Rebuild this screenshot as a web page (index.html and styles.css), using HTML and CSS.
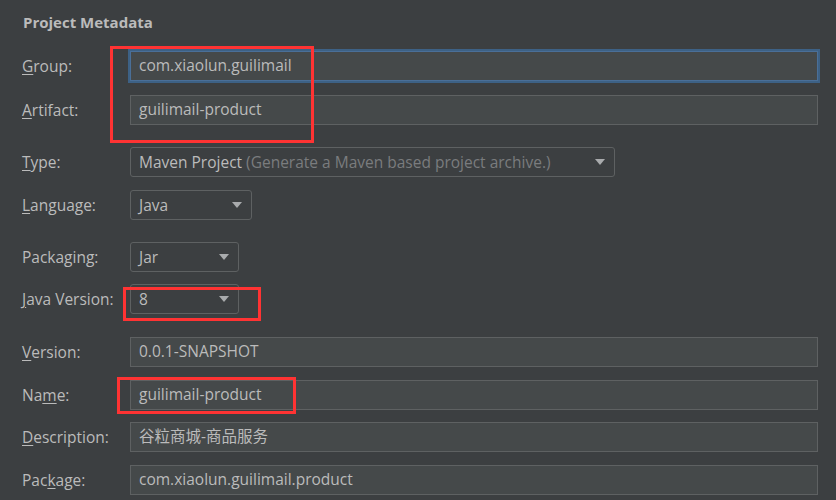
FILE: index.html
```html
<!DOCTYPE html>
<html>
<head>
<meta charset="utf-8">
<link rel="stylesheet" href="styles.css">
</head>
<body>
<div class="panel">
  <div class="title">Project Metadata</div>
  <div class="section s1">
    <div class="row"><label class="lbl"><u>G</u>roup:</label><div class="field focused">com.xiaolun.guilimail</div></div>
    <div class="row"><label class="lbl"><u>A</u>rtifact:</label><div class="field">guilimail-product</div></div>
  </div>
  <div class="section s2">
    <div class="row"><label class="lbl"><u>T</u>ype:</label><div class="combo w-type"><span>Maven Project <span class="hint">(Generate a Maven based project archive.)</span></span><i class="arrow"></i></div></div>
    <div class="row"><label class="lbl"><u>L</u>anguage:</label><div class="combo w-lang"><span>Java</span><i class="arrow"></i></div></div>
  </div>
  <div class="section s3">
    <div class="row"><label class="lbl">Packaging:</label><div class="combo w-small"><span>Jar</span><i class="arrow"></i></div></div>
    <div class="row"><label class="lbl"><u>J</u>ava Version:</label><div class="combo w-small"><span>8</span><i class="arrow"></i></div></div>
  </div>
  <div class="section s4">
    <div class="row"><label class="lbl"><u>V</u>ersion:</label><div class="field">0.0.1-SNAPSHOT</div></div>
    <div class="row"><label class="lbl">Na<u>m</u>e:</label><div class="field">guilimail-product</div></div>
    <div class="row"><label class="lbl"><u>D</u>escription:</label><div class="field">谷粒商城-商品服务</div></div>
    <div class="row"><label class="lbl">Pac<u>k</u>age:</label><div class="field">com.xiaolun.guilimail.product</div></div>
  </div>
  <div class="mark m1"></div>
  <div class="mark m2"></div>
  <div class="mark m3"></div>
</div>
</body>
</html>
```

FILE: styles.css
```css
html, body {
  margin: 0;
  padding: 0;
  background: #3c3f41;
}
body {
  width: 836px;
  height: 500px;
  overflow: hidden;
  font-family: "Open Sans", "Noto Sans CJK SC", sans-serif;
  font-size: 15.5px;
  color: #bbbbbb;
}
.panel {
  position: relative;
  padding: 12px 18px 0 22px;
}
.title {
  font-weight: bold;
  font-size: 15px;
  line-height: 20px;
  padding-left: 1px;
  height: 20px;
}
.section {
  display: flex;
  flex-direction: column;
}
.s1 { margin-top: 19px; gap: 14px; }
.s2 { margin-top: 22px; gap: 13px; }
.s3 { margin-top: 22px; gap: 12px; }
.s4 { margin-top: 23px; gap: 12.67px; }
.row {
  display: flex;
  align-items: center;
  height: 30px;
}
.lbl {
  width: 108px;
  flex: none;
  line-height: 28px;
}
.lbl u {
  text-underline-offset: 2px;
}
.field {
  box-sizing: border-box;
  flex: 1;
  height: 30px;
  background: #45494a;
  border: 1px solid #5e6162;
  padding: 0 8px;
  line-height: 27px;
  white-space: nowrap;
  color: #bbbbbb;
}
.field.focused {
  border-color: #4a6f98;
  box-shadow: 0 0 0 2px #3d6185;
}
.combo {
  box-sizing: border-box;
  height: 30px;
  border: 1px solid #5e6162;
  border-radius: 3px;
  background: #3c3f41;
  padding: 0 9px 1px 8px;
  display: flex;
  align-items: center;
  justify-content: space-between;
  white-space: nowrap;
}
.w-type { width: 485px; }
.w-lang { width: 122px; }
.w-small { width: 109px; }
.hint { color: #7a7c7e; }
.arrow {
  width: 0;
  height: 0;
  margin-top: 1px;
  border-left: 5.5px solid transparent;
  border-right: 5.5px solid transparent;
  border-top: 6px solid #a9abad;
}
.mark {
  position: absolute;
  box-sizing: border-box;
  border: 3px solid #f33;
}
.m1 { left: 110px; top: 46px; width: 204px; height: 97px; }
.m2 { left: 123px; top: 287px; width: 138px; height: 34px; }
.m3 { left: 117px; top: 377px; width: 179px; height: 37px; }
```
